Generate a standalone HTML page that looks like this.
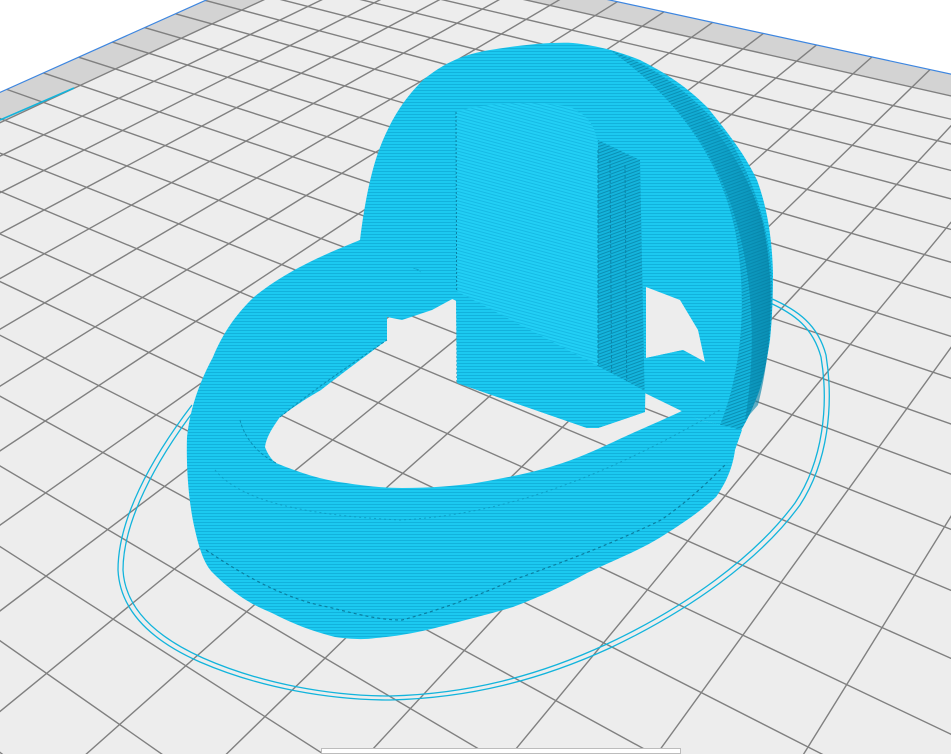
<!DOCTYPE html>
<html><head><meta charset="utf-8">
<style>
html,body{margin:0;padding:0;background:#fff;width:951px;height:754px;overflow:hidden}
svg{display:block}
</style></head>
<body>
<svg id="s" width="951" height="754" viewBox="0 0 951 754" xmlns="http://www.w3.org/2000/svg" style="overflow:hidden">
<defs>
<pattern id="st" width="4" height="3" patternUnits="userSpaceOnUse">
<rect width="4" height="3" fill="#1cc9f0"/><rect width="4" height="1" fill="#12b2dc"/>
</pattern>
<pattern id="st2" width="4" height="3" patternUnits="userSpaceOnUse" patternTransform="rotate(-20)">
<rect width="4" height="3" fill="#14b4dc"/><rect width="4" height="1" fill="#0a8fb4"/>
</pattern>
<pattern id="st3" width="4" height="3" patternUnits="userSpaceOnUse" patternTransform="rotate(15)">
<rect width="4" height="3" fill="#22cff5"/><rect width="4" height="1" fill="#16bae4"/>
</pattern>
<linearGradient id="dk" x1="0" y1="0" x2="1" y2="0">
<stop offset="0" stop-color="#0a9cc4" stop-opacity="0"/><stop offset="1" stop-color="#067fa3" stop-opacity="0.7"/>
</linearGradient>
</defs>
<g id="plate"></g>
<g id="obj">
<path d="M192,405 C150,460 118,520 118,570 C120,610 150,640 200,662 C260,688 330,700 390,700 C470,698 540,680 610,648 C690,610 760,560 800,505 C828,462 834,405 826,355 C818,325 798,310 770,298" fill="none" stroke="#12b4dc" stroke-width="1.3"/>
<path d="M196,408 C155,462 123,522 123,570 C125,607 154,636 203,658 C262,684 331,696 390,696 C468,694 538,676 607,644 C686,607 755,557 795,503 C823,461 829,405 821,357 C813,328 795,314 768,302" fill="none" stroke="#12b4dc" stroke-width="1.3"/>
<path d="M352,250 L360,240 C365,200 372,165 383,140 C395,112 408,95 423,80 C445,62 465,54 490,50 C520,45 550,42 573,43 C600,46 620,52 640,60 C670,75 690,90 707,107 C730,135 745,155 757,180 C768,210 772,240 773,273 C773,300 772,320 770,340 C766,365 762,385 757,397 L740,430 L700,420 Z" fill="url(#st)"/>
<path d="M610,50 C660,68 700,100 730,140 C760,190 775,250 772,310 C770,360 760,400 740,432 L720,425 C742,370 748,300 735,230 C720,160 680,100 610,50 Z" fill="url(#st2)"/>
<path d="M650,72 C700,100 745,160 762,220 C776,280 772,350 758,405 L745,420 C760,330 752,220 700,140 Z" fill="url(#dk)"/>
<path d="M646,287 L680,300 L698,330 L705,362 L683,350 L646,358 Z" fill="#ededed"/>
<path d="M598,140 L640,160 L645,412 L598,428 Z" fill="url(#st2)"/>
<path d="M456,112 C480,103 540,99 572,108 C593,118 598,132 598,155 L598,428 L587,428 L457,383 Z" fill="url(#st3)"/>
<path d="M456,112 L457,383" stroke="#0b7ea0" stroke-width="1" stroke-dasharray="2 2"/>
<path d="M598,150 L598,428 M610,160 L612,420 M625,165 L627,416" stroke="#0b84a8" stroke-width="1" stroke-dasharray="3 2"/>
<ellipse cx="414" cy="290" rx="12" ry="22" fill="url(#st2)"/>
<path fill-rule="evenodd" fill="url(#st)" d="M360,240 L343,247 C300,265 275,280 254,297 C235,315 222,335 213,357 C198,385 190,410 187,437 C186,470 189,505 195,530 C200,552 205,565 213,573 C235,595 252,605 272,613 C295,625 315,632 335,637 C350,639 362,640 376,638 C400,636 420,632 439,627 C465,620 490,614 513,607 C540,597 565,585 587,573 C615,560 640,550 661,537 C685,522 702,510 716,497 C728,480 733,465 735,450 L742,430 L700,420 Z
M387,317 L387,340 C360,360 340,375 321,390 C300,402 290,410 280,417 C272,428 266,438 265,447 C268,455 272,460 276,463 C300,473 322,480 346,483 C365,486 385,488 402,488 C430,488 455,486 476,483 C505,478 530,473 550,467 C580,458 600,448 624,437 C650,425 675,415 698,403 C703,390 706,375 705,362 L683,350 L646,358 L645,412 L598,428 L587,428 L457,383 L456,297 L432,310 L402,320 Z"/>
<path d="M206,550 C250,580 290,600 328,607 C360,615 380,620 402,620 C440,610 480,595 513,580 C570,560 620,540 661,520 C690,500 710,480 727,463" fill="none" stroke="#0a7ea0" stroke-width="1.2" stroke-dasharray="3 3"/>
<path d="M276,463 C260,455 245,440 240,420" fill="none" stroke="#0a8fb4" stroke-width="1" stroke-dasharray="3 2"/>
<path d="M280,417 C320,385 350,365 387,340" fill="none" stroke="#0a8fb4" stroke-width="1" stroke-dasharray="3 2"/>
<path d="M215,470 C240,500 300,515 400,520 C500,515 600,480 720,410" fill="none" stroke="#0c92b8" stroke-width="1" stroke-dasharray="2 3" opacity="0.7"/>
</g>
<rect x="321.5" y="748.5" width="359" height="5" fill="#fff" stroke="#bcbcbc" stroke-width="1"/>
</svg>
<script>
(function(){
var O=[338,-59],VU=[1680,-660],VV=[-1600,-480],a=-0.018,b=-0.018;
function P(u,v){var w=1+u*a+v*b;return [(O[0]+u*a*VU[0]+v*b*VV[0])/w,(O[1]+u*a*VU[1]+v*b*VV[1])/w];}
var g=document.getElementById('plate'),h='';
var M=34,LIM=51;
function poly(pts,fill){return '<polygon points="'+pts.map(function(p){return p[0].toFixed(1)+','+p[1].toFixed(1)}).join(' ')+'" fill="'+fill+'"/>';}
var outline=[P(0,0)];for(var t=0;t<=M;t++)outline.push(P(t,0));
for(var t=M;t>=0;t--){var v=Math.min(M,LIM-t-0.3);outline.push(P(t,v));}
h+=poly(outline,'#ededed');
var s1=[],s2=[];
for(var t=0;t<=20;t++)s1.push(P(t,0));for(var t=20;t>=0;t--)s1.push(P(t,1));
for(var t=0;t<=20;t++)s2.push(P(0,t));for(var t=20;t>=0;t--)s2.push(P(1,t));
h+=poly(s1,'#d3d3d3')+poly(s2,'#d3d3d3');
for(var u=1;u<=M;u++){var vmax=Math.min(M,LIM-u-0.3);if(vmax<=0)continue;var A=P(u,0),B=P(u,vmax);
h+='<line x1="'+A[0].toFixed(1)+'" y1="'+A[1].toFixed(1)+'" x2="'+B[0].toFixed(1)+'" y2="'+B[1].toFixed(1)+'" stroke="#808080" stroke-width="1.4"/>';}
for(var v=1;v<=M;v++){var umax=Math.min(M,LIM-v-0.3);if(umax<=0)continue;var A=P(0,v),B=P(umax,v);
h+='<line x1="'+A[0].toFixed(1)+'" y1="'+A[1].toFixed(1)+'" x2="'+B[0].toFixed(1)+'" y2="'+B[1].toFixed(1)+'" stroke="#808080" stroke-width="1.4"/>';}
var E1=P(0,0),E2=P(20,0),E3=P(0,20);
h+='<line x1="'+E1[0]+'" y1="'+E1[1]+'" x2="'+E2[0]+'" y2="'+E2[1]+'" stroke="#3d86e0" stroke-width="1.2"/>';
h+='<line x1="'+E1[0]+'" y1="'+E1[1]+'" x2="'+E3[0]+'" y2="'+E3[1]+'" stroke="#3d86e0" stroke-width="1.2"/>';
h+='<line x1="0" y1="120" x2="74" y2="88" stroke="#12b4dc" stroke-width="1.5"/>';
g.innerHTML=h;
})();
</script>
</body></html>
